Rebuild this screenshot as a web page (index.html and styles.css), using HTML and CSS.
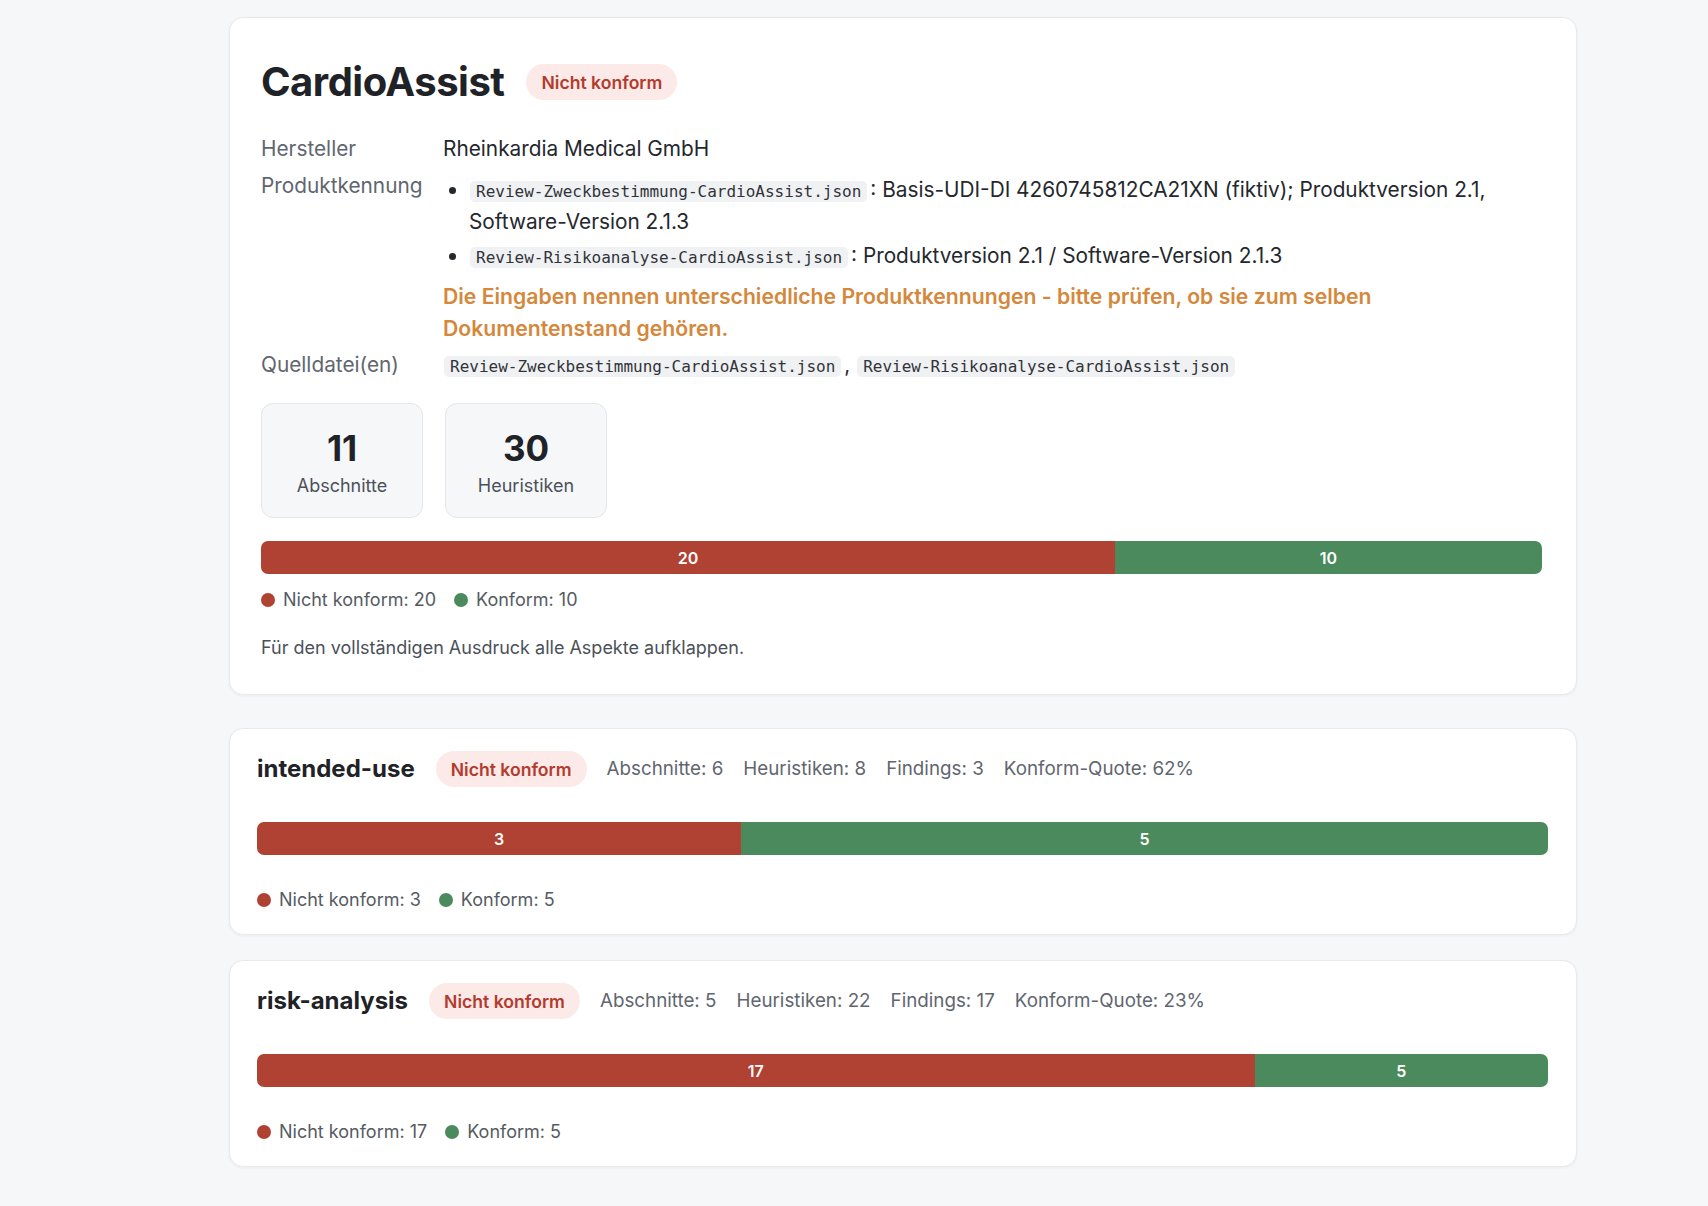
FILE: index.html
```html
<!DOCTYPE html>
<html lang="de">
<head>
<meta charset="utf-8">
<title>CardioAssist – Prüfbericht</title>
<link rel="stylesheet" href="styles.css">
</head>
<body>
<main class="page">
  <section class="card summary">
    <header class="summary-head">
      <h1 class="product-title">CardioAssist</h1>
      <span class="badge">Nicht konform</span>
    </header>
    <dl class="facts">
      <dt>Hersteller</dt>
      <dd>Rheinkardia Medical GmbH</dd>
      <dt>Produktkennung</dt>
      <dd>
        <ul class="ident-list">
          <li><code>Review-Zweckbestimmung-CardioAssist.json</code><span>: Basis-UDI-DI 4260745812CA21XN (fiktiv); Produktversion 2.1,</span> <span>Software-Version 2.1.3</span></li>
          <li><code>Review-Risikoanalyse-CardioAssist.json</code><span>: Produktversion 2.1 / Software-Version 2.1.3</span></li>
        </ul>
        <p class="warning"><span>Die Eingaben nennen unterschiedliche Produktkennungen - bitte prüfen, ob sie zum selben</span> <span>Dokumentenstand gehören.</span></p>
      </dd>
      <dt>Quelldatei(en)</dt>
      <dd><code>Review-Zweckbestimmung-CardioAssist.json</code>, <code>Review-Risikoanalyse-CardioAssist.json</code></dd>
    </dl>
    <div class="stats">
      <div class="stat"><div class="stat-num">11</div><div class="stat-label">Abschnitte</div></div>
      <div class="stat"><div class="stat-num">30</div><div class="stat-label">Heuristiken</div></div>
    </div>
    <div class="bar">
      <div class="seg seg-bad" style="flex-grow:20">20</div>
      <div class="seg seg-good" style="flex-grow:10">10</div>
    </div>
    <div class="legend">
      <span class="legend-item"><span class="dot dot-bad"></span>Nicht konform: 20</span>
      <span class="legend-item"><span class="dot dot-good"></span>Konform: 10</span>
    </div>
    <p class="note">Für den vollständigen Ausdruck alle Aspekte aufklappen.</p>
  </section>

  <div class="aspects">
    <section class="card aspect">
      <header class="aspect-head">
        <h2 class="aspect-title">intended-use</h2>
        <span class="badge">Nicht konform</span>
        <span class="meta">Abschnitte: 6</span>
        <span class="meta">Heuristiken: 8</span>
        <span class="meta">Findings: 3</span>
        <span class="meta">Konform-Quote: 62%</span>
      </header>
      <div class="bar">
        <div class="seg seg-bad" style="flex-grow:3">3</div>
        <div class="seg seg-good" style="flex-grow:5">5</div>
      </div>
      <div class="legend">
        <span class="legend-item"><span class="dot dot-bad"></span>Nicht konform: 3</span>
        <span class="legend-item"><span class="dot dot-good"></span>Konform: 5</span>
      </div>
    </section>

    <section class="card aspect">
      <header class="aspect-head">
        <h2 class="aspect-title">risk-analysis</h2>
        <span class="badge">Nicht konform</span>
        <span class="meta">Abschnitte: 5</span>
        <span class="meta">Heuristiken: 22</span>
        <span class="meta">Findings: 17</span>
        <span class="meta">Konform-Quote: 23%</span>
      </header>
      <div class="bar">
        <div class="seg seg-bad" style="flex-grow:17">17</div>
        <div class="seg seg-good" style="flex-grow:5">5</div>
      </div>
      <div class="legend">
        <span class="legend-item"><span class="dot dot-bad"></span>Nicht konform: 17</span>
        <span class="legend-item"><span class="dot dot-good"></span>Konform: 5</span>
      </div>
    </section>
  </div>
</main>
</body>
</html>
```

FILE: styles.css
```css
* { box-sizing: border-box; }

html, body {
  margin: 0;
  padding: 0;
  background: #f6f7f9;
}

body {
  font-family: Inter, "Noto Sans", "DejaVu Sans", sans-serif;
  color: #22262b;
}

.page {
  width: 1348px;
  margin-left: 229px;
  padding-top: 17px;
  padding-bottom: 40px;
}

.card {
  background: #ffffff;
  border: 1px solid #e7e9ec;
  border-radius: 14px;
  box-shadow: 0 1px 3px rgba(20, 30, 40, 0.05);
}

/* ---------- summary card ---------- */
.summary {
  padding: 40px 32px 34px 31px;
}

.summary-head {
  display: flex;
  align-items: center;
  gap: 22px;
}

.product-title {
  margin: 0;
  font-size: 40px;
  line-height: 48px;
  font-weight: 700;
  color: #1f2328;
  letter-spacing: -0.5px;
}

.badge {
  display: inline-flex;
  align-items: center;
  height: 36px;
  padding: 0 15px;
  border-radius: 18px;
  background: #fbeae8;
  color: #b33b2e;
  font-size: 17.6px;
  font-weight: 600;
  white-space: nowrap;
}

.facts {
  display: grid;
  grid-template-columns: 182px 1fr;
  row-gap: 5px;
  margin: 27px 0 0;
  font-size: 20.8px;
  line-height: 32px;
}

.facts dt {
  color: #5f6670;
}

.facts dd {
  margin: 0;
  color: #24282d;
}

code {
  font-family: "DejaVu Sans Mono", "Liberation Mono", monospace;
  font-size: 16px;
  line-height: 19px;
  background: #f0f1f3;
  color: #30343a;
  padding: 1px 6px;
  margin-left: 1px;
  margin-right: 3px;
  border-radius: 5px;
}

.ident-list {
  margin: 4px 0 0;
  padding-left: 26px;
}

.ident-list li {
  line-height: 32px;
}

.ident-list li + li {
  margin-top: 2px;
}

.warning {
  margin: 8px 0 0;
  max-width: 1040px;
  color: #d4883c;
  font-size: 21.2px;
  font-weight: 600;
  line-height: 32px;
}

.stats {
  display: flex;
  gap: 22px;
  margin-top: 22px;
}

.stat {
  width: 162px;
  padding: 20px 12px 17px;
  background: #f6f7f9;
  border: 1px solid #e4e6e9;
  border-radius: 12px;
  text-align: center;
}

.stat-num {
  font-size: 35px;
  line-height: 48px;
  font-weight: 700;
  color: #1f2328;
}

.stat-label {
  font-size: 18px;
  line-height: 28px;
  color: #4b5159;
}

.bar {
  display: flex;
  height: 33px;
  border-radius: 7px;
  overflow: hidden;
  margin-top: 23px;
}

.summary .bar {
  margin-right: 2px;
}

.seg {
  flex-basis: 0;
  display: flex;
  align-items: center;
  justify-content: center;
  color: #ffffff;
  font-size: 16px;
  font-weight: 600;
}

.seg-bad { background: #b04233; }
.seg-good { background: #4b8a5d; }

.legend {
  display: flex;
  gap: 18px;
  margin-top: 14px;
  font-size: 18px;
  line-height: 24px;
  color: #555b63;
}

.legend-item {
  display: inline-flex;
  align-items: center;
  gap: 8px;
}

.dot {
  width: 14px;
  height: 14px;
  border-radius: 50%;
  display: inline-block;
}

.dot-bad { background: #b04233; }
.dot-good { background: #4b8a5d; }

.note {
  margin: 24px 0 0;
  font-size: 18px;
  line-height: 24px;
  color: #4b5159;
}

/* ---------- aspect cards ---------- */
.aspects {
  display: flex;
  flex-direction: column;
  gap: 25px;
  margin-top: 33px;
}

.aspect {
  padding: 22px 28px 22px 27px;
}

.aspect .legend {
  margin-top: 33px;
}

.aspect-head {
  display: flex;
  align-items: center;
  gap: 20px;
}

.aspect-title {
  margin: 0 1px 0 0;
  font-size: 24px;
  line-height: 36px;
  font-weight: 700;
  color: #1f2328;
}

.meta {
  font-size: 18.8px;
  line-height: 24px;
  color: #5f6670;
}

.aspect .bar {
  margin-top: 35px;
}
```
